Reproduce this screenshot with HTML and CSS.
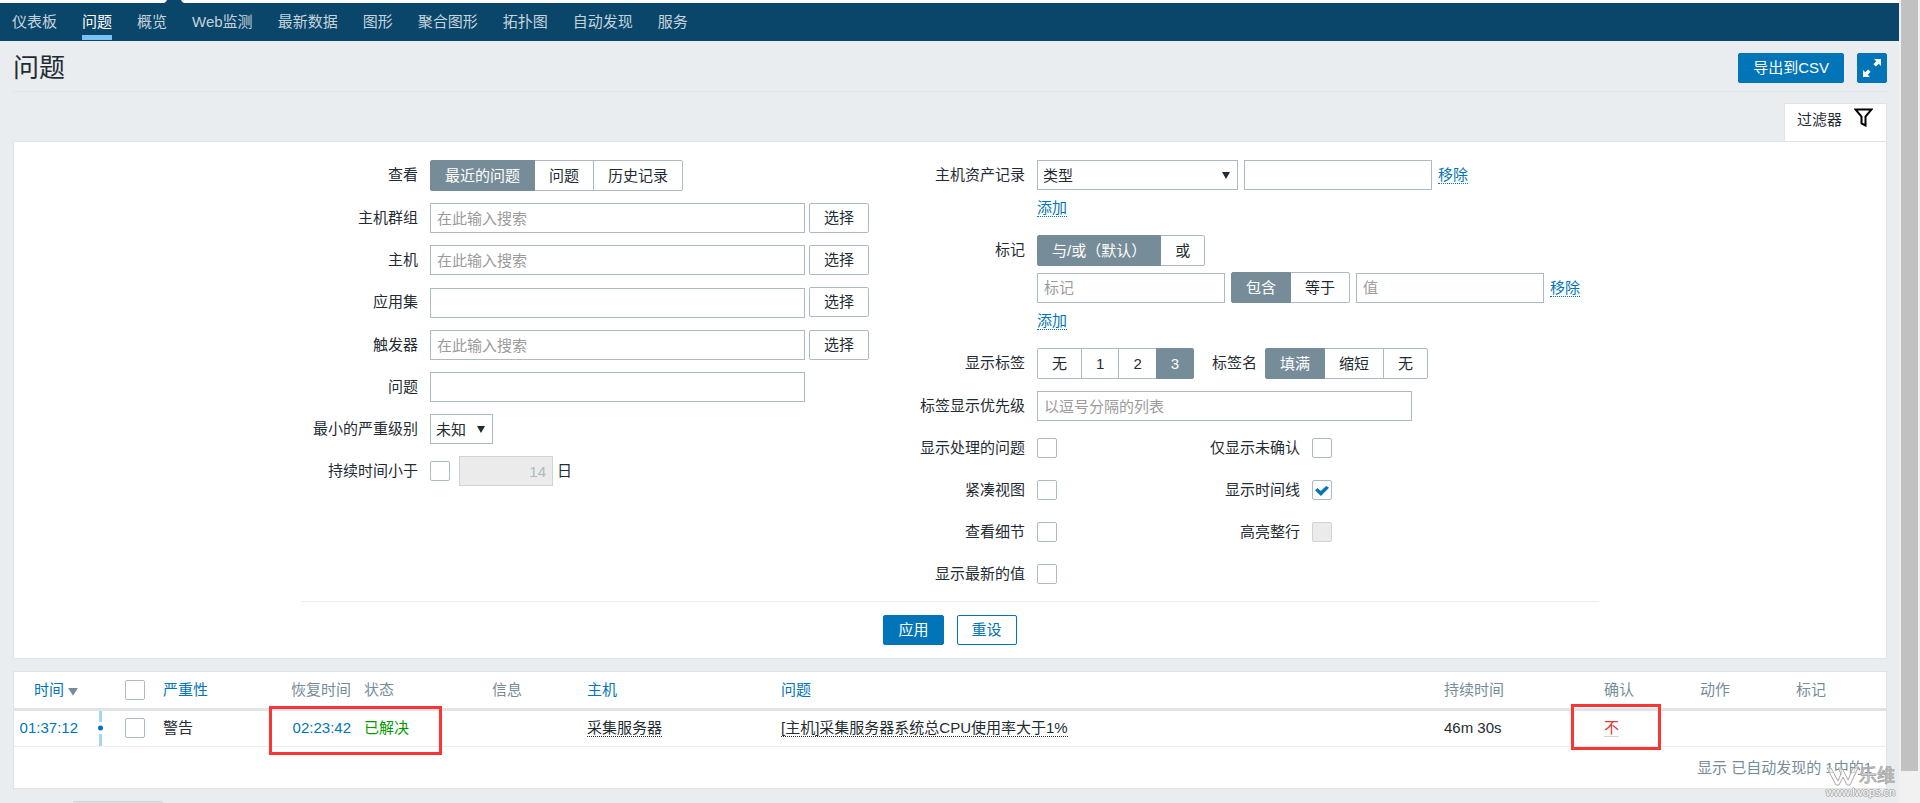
FILE: index.html
```html
<!DOCTYPE html>
<html lang="zh-CN">
<head>
<meta charset="utf-8">
<title>问题</title>
<link rel="stylesheet" href="styles.css">
</head>
<body>
<div class="page">
  <header class="top">
    <svg class="top-marker" width="20" height="3" viewBox="0 0 20 3" aria-hidden="true"><path d="M0 3Q2 2.500 3 0H17Q18 2.500 20 3Z"/></svg>
    <nav class="nav">
      <a href="#">仪表板</a>
      <a href="#" class="active">问题</a>
      <a href="#">概览</a>
      <a href="#">Web监测</a>
      <a href="#">最新数据</a>
      <a href="#">图形</a>
      <a href="#">聚合图形</a>
      <a href="#">拓扑图</a>
      <a href="#">自动发现</a>
      <a href="#">服务</a>
    </nav>
  </header>

  <main class="content">
    <div class="title-bar">
      <h1>问题</h1>
      <button type="button" class="btn primary">导出到CSV</button>
      <button type="button" class="btn primary icon-btn" aria-label="全屏">
        <svg width="18" height="18" viewBox="0 0 18 18" aria-hidden="true"><path fill="currentColor" d="M11 0H18V7L15.700 4.700 12.800 7.600 10.400 5.200 13.300 2.300ZM0 11L2.300 13.300 5.200 10.400 7.600 12.800 4.700 15.700 7 18H0Z"/></svg>
      </button>
    </div>

    <div class="tab-row">
      <a href="#filter" class="filter-tab">过滤器
        <svg width="19" height="19" viewBox="0 0 19 19" aria-hidden="true"><path fill="none" stroke="#000" stroke-width="2" d="M1.500 1.500H17.500L11.500 8.500V17.500L7.500 15.500V8.500Z"/></svg>
      </a>
    </div>

    <form class="filter" id="filter">
      <div class="filter-body">
        <div class="form-left">
          <div class="row">
            <span class="label" id="l-show">查看</span>
            <div class="segment" role="radiogroup" aria-labelledby="l-show">
              <label><input type="radio" name="show" checked>最近的问题</label>
              <label><input type="radio" name="show">问题</label>
              <label><input type="radio" name="show">历史记录</label>
            </div>
          </div>
          <div class="row">
            <label class="label" for="groups">主机群组</label>
            <div class="field"><input id="groups" class="text wide" type="text" placeholder="在此输入搜索"><button type="button" class="btn plain">选择</button></div>
          </div>
          <div class="row">
            <label class="label" for="hosts">主机</label>
            <div class="field"><input id="hosts" class="text wide" type="text" placeholder="在此输入搜索"><button type="button" class="btn plain">选择</button></div>
          </div>
          <div class="row tall">
            <label class="label" for="apps">应用集</label>
            <div class="field"><input id="apps" class="text wide" type="text"><button type="button" class="btn plain">选择</button></div>
          </div>
          <div class="row">
            <label class="label" for="triggers">触发器</label>
            <div class="field"><input id="triggers" class="text wide" type="text" placeholder="在此输入搜索"><button type="button" class="btn plain">选择</button></div>
          </div>
          <div class="row">
            <label class="label" for="problem">问题</label>
            <div class="field"><input id="problem" class="text wide" type="text"></div>
          </div>
          <div class="row">
            <label class="label" for="severity">最小的严重级别</label>
            <div class="select severity"><select id="severity"><option>未知</option></select></div>
          </div>
          <div class="row">
            <label class="label" for="age">持续时间小于</label>
            <div class="field age"><input id="age" class="check" type="checkbox"><input class="text days" type="text" value="14" aria-label="天数" disabled><span>日</span></div>
          </div>
        </div>

        <div class="form-right">
          <div class="row">
            <label class="label" for="inventory">主机资产记录</label>
            <div class="stack">
              <div class="field inventory">
                <div class="select inventory-type"><select id="inventory"><option>类型</option></select></div>
                <input class="text half" type="text" aria-label="主机资产记录值">
                <a href="#" class="action">移除</a>
              </div>
              <a href="#" class="action add">添加</a>
            </div>
          </div>
          <div class="row">
            <span class="label" id="l-tags">标记</span>
            <div class="stack">
              <div class="segment" role="radiogroup" aria-labelledby="l-tags">
                <label><input type="radio" name="evaltype" checked>与/或（默认）</label>
                <label><input type="radio" name="evaltype">或</label>
              </div>
              <div class="field tag">
                <input class="text half" type="text" placeholder="标记" aria-label="标记">
                <div class="segment" role="radiogroup" aria-label="匹配方式">
                  <label><input type="radio" name="operator" checked>包含</label>
                  <label><input type="radio" name="operator">等于</label>
                </div>
                <input class="text half" type="text" placeholder="值" aria-label="值">
                <a href="#" class="action">移除</a>
              </div>
              <a href="#" class="action add">添加</a>
            </div>
          </div>
          <div class="row">
            <span class="label" id="l-showtags">显示标签</span>
            <div class="field">
              <div class="segment" role="radiogroup" aria-labelledby="l-showtags">
                <label><input type="radio" name="showtags">无</label>
                <label><input type="radio" name="showtags">1</label>
                <label><input type="radio" name="showtags">2</label>
                <label><input type="radio" name="showtags" checked>3</label>
              </div>
              <span class="tag-name" id="l-tagname">标签名</span>
              <div class="segment" role="radiogroup" aria-labelledby="l-tagname">
                <label><input type="radio" name="tagname" checked>填满</label>
                <label><input type="radio" name="tagname">缩短</label>
                <label><input type="radio" name="tagname">无</label>
              </div>
            </div>
          </div>
          <div class="row">
            <label class="label" for="priority">标签显示优先级</label>
            <input id="priority" class="text wide" type="text" placeholder="以逗号分隔的列表">
          </div>
          <div class="row pair">
            <label class="label" for="suppressed">显示处理的问题</label><input id="suppressed" class="check" type="checkbox">
            <label class="label" for="unack">仅显示未确认</label><input id="unack" class="check" type="checkbox">
          </div>
          <div class="row pair">
            <label class="label" for="compact">紧凑视图</label><input id="compact" class="check" type="checkbox">
            <label class="label" for="timeline">显示时间线</label><input id="timeline" class="check" type="checkbox" checked>
          </div>
          <div class="row pair">
            <label class="label" for="details">查看细节</label><input id="details" class="check" type="checkbox">
            <label class="label" for="highlight">高亮整行</label><input id="highlight" class="check" type="checkbox" disabled>
          </div>
          <div class="row pair">
            <label class="label" for="latest">显示最新的值</label><input id="latest" class="check" type="checkbox">
          </div>
        </div>
      </div>
      <div class="filter-actions">
        <button type="button" class="btn primary">应用</button>
        <button type="reset" class="btn outline">重设</button>
      </div>
    </form>

    <section class="list">
      <table class="problems">
        <colgroup>
          <col class="c-time"><col class="c-line"><col class="c-check"><col class="c-severity"><col class="c-recovery"><col class="c-status"><col class="c-info"><col class="c-host"><col><col class="c-duration"><col class="c-ack"><col class="c-actions"><col class="c-tags">
        </colgroup>
        <thead>
          <tr>
            <th class="right"><a href="#" class="sort">时间<span class="sort-arrow"></span></a></th>
            <th></th>
            <th><input class="check" type="checkbox" aria-label="全选"></th>
            <th><a href="#">严重性</a></th>
            <th class="right">恢复时间</th>
            <th>状态</th>
            <th>信息</th>
            <th><a href="#">主机</a></th>
            <th><a href="#">问题</a></th>
            <th>持续时间</th>
            <th>确认</th>
            <th>动作</th>
            <th>标记</th>
          </tr>
        </thead>
        <tbody>
          <tr>
            <td class="right time"><a href="#">01:37:12</a></td>
            <td class="axis"><span class="dot"></span></td>
            <td><input class="check" type="checkbox" aria-label="选择问题"></td>
            <td>警告</td>
            <td class="right marked"><a href="#">02:23:42</a><span class="mark mark-status"></span></td>
            <td class="ok">已解决</td>
            <td></td>
            <td><a href="#" class="dotted">采集服务器</a></td>
            <td><a href="#" class="dotted">[主机]采集服务器系统总CPU使用率大于1%</a></td>
            <td>46m 30s</td>
            <td class="marked"><a href="#" class="no">不</a><span class="mark mark-ack"></span></td>
            <td></td>
            <td></td>
          </tr>
        </tbody>
      </table>
      <p class="stats">显示 已自动发现的 1中的1</p>
    </section>

    <button type="button" class="btn bulk" disabled aria-label="批量更新"></button>
  </main>

  <div class="watermark">
    <svg width="33" height="19" viewBox="0 0 33 19" aria-hidden="true"><path fill="#fff" fill-opacity=".6" stroke="#aaa" d="M1 1H5L12 14 15 7 12 1H16L22 13 27 1H32L24 18H21L17 10 13 18H10Z"/></svg>
    <span class="wm-name">乐维</span>
    <span class="wm-url">www.lwops.cn</span>
  </div>
</div>
<div class="scroll-track"><div class="scroll-thumb"></div></div>
</body>
</html>
```

FILE: styles.css
```css
* { box-sizing: border-box; }

body {
  margin: 0;
  display: flex;
  height: 100vh;
  overflow: hidden;
  background: #e9edf0;
  color: #1f2c33;
  font: 15px/18px "Liberation Sans", "Noto Sans CJK SC", sans-serif;
}

a { color: #0275b8; text-decoration: none; }
input, select, button { font: inherit; color: inherit; margin: 0; }

.page { position: relative; flex: 1; min-width: 0; height: 100vh; overflow: hidden; }

/* Navigation */
.top { position: relative; border-top: 3px solid #fff; background: #0a466a; }
.top-marker { position: absolute; left: 164px; top: -3px; fill: #0a466a; }
.nav { display: flex; gap: 25px; height: 38px; padding: 0 12px 1px; }
.nav a { padding-top: 10px; color: #c5d3dc; border-bottom: 5px solid transparent; }
.nav .active { color: #fff; border-color: #7ac2f5; }

.content { padding: 0 12px 0 13px; }

/* Title */
.title-bar {
  display: flex;
  align-items: center;
  gap: 13px;
  height: 51px;
  padding-top: 4px;
  border-bottom: 1px solid #dfe4e7;
}
h1 { flex: 1; margin: 0; font-size: 26px; line-height: 32px; font-weight: 400; }

.btn {
  display: flex;
  align-items: center;
  justify-content: center;
  height: 30px;
  padding: 0 14px;
  border: 1px solid;
  border-radius: 2px;
}
.primary { background: #0275b8; border-color: #0275b8; color: #fff; }
.plain { background: #fff; border-color: #acbbc2; }
.outline { background: #fff; border-color: #0275b8; color: #0275b8; }
.icon-btn { width: 30px; padding: 0; }

/* Filter */
.tab-row { display: flex; justify-content: flex-end; margin-top: 11px; }
.filter-tab {
  display: flex;
  gap: 12px;
  height: 38px;
  padding: 4px 13px 0 12px;
  background: #fff;
  border: 1px solid #dfe4e7;
  border-bottom: 0;
  border-radius: 2px 2px 0 0;
  color: #1f2c33;
  line-height: 24px;
}
.filter {
  padding: 18px 0 13px;
  background: #fff;
  border: 1px solid #dfe4e7;
}
.filter-body {
  display: flex;
  gap: 51px;
  max-width: 1298px;
  margin: 0 auto;
  padding-bottom: 12px;
  border-bottom: 1px solid #ebeef0;
}
.form-left, .form-right { display: flex; flex-direction: column; gap: 12px; }
.row { display: flex; gap: 12px; }
.tall { min-height: 31px; }
.label { line-height: 30px; text-align: right; }
.form-left .label { width: 117px; }
.form-right .label { width: 105px; }
.field { display: flex; gap: 4px; }
.stack { display: flex; flex-direction: column; align-items: flex-start; padding-bottom: 6px; }

.text {
  height: 30px;
  padding: 0 6px;
  border: 1px solid #acbbc2;
  background: #fff;
}
.tall .text { align-self: flex-end; }
.text::placeholder { color: #9b9b9b; opacity: 1; }
.wide { width: 375px; }
.half { width: 188px; }
.days { width: 94px; background: #ebebeb; border-color: #ccd5d9; color: #acbbc2; text-align: right; }

.check {
  appearance: none;
  flex: none;
  display: block;
  width: 20px;
  height: 20px;
  border: 1px solid #acbbc2;
  border-radius: 2px;
  background: #fff;
}
.check:disabled { background: #ebebeb; border-color: #ccd5d9; }
.check:checked::before {
  content: "";
  display: block;
  width: 14px;
  height: 10px;
  margin: 5px 2px;
  background: #0275b8;
  clip-path: polygon(0 42%, 18% 20%, 40% 50%, 80% 0, 100% 18%, 42% 100%);
}

.select { position: relative; }
.select select {
  appearance: none;
  display: block;
  width: 100%;
  height: 30px;
  padding: 2px 5px 0;
  border: 1px solid #acbbc2;
  border-radius: 0;
  background: #fff;
}
.select::after {
  content: "";
  position: absolute;
  right: 8px;
  top: 12px;
  width: 8px;
  height: 7px;
  background: #1f2c33;
  clip-path: polygon(0 0, 100% 0, 50% 100%);
  pointer-events: none;
}
.severity { width: 63px; }
.inventory-type { width: 201px; }

.segment { display: flex; }
.segment label {
  position: relative;
  height: 31px;
  padding: 0 14px;
  border: 1px solid #acbbc2;
  line-height: 30px;
  white-space: nowrap;
}
.segment label + label { margin-left: -1px; }
.segment label:first-child { border-radius: 2px 0 0 2px; }
.segment label:last-child { border-radius: 0 2px 2px 0; }
.segment label:has(:checked) { z-index: 1; background: #768d99; border-color: #768d99; color: #fff; }
.segment input { position: absolute; opacity: 0; pointer-events: none; }

.age { align-items: center; }
.age .check { margin-right: 5px; }
.inventory, .tag { align-items: center; gap: 6px; }
.tag { margin-top: 6px; }
.tag-name { margin: 0 4px 0 14px; line-height: 30px; }
.action { line-height: 17px; border-bottom: 1px dotted; }
.add { margin-top: 9px; }
.pair { align-items: center; }
.pair .check + .label { width: 231px; }

.filter-actions { display: flex; justify-content: center; gap: 13px; padding-top: 13px; }

/* Problem list */
.list { margin-top: 12px; background: #fff; border: 1px solid #dfe4e7; }
.problems { width: 100%; table-layout: fixed; border-collapse: collapse; }
.problems th, .problems td { padding: 0; text-align: left; font-weight: 400; white-space: nowrap; }
.problems th { height: 37px; border-bottom: 3px solid #dfe4e7; color: #768d99; }
.problems td { height: 37px; border-bottom: 1px solid #ebeef0; }
.problems .right { text-align: right; padding-right: 13px; }
.c-time { width: 77px; }
.c-line { width: 34px; }
.c-check { width: 38px; }
.c-severity { width: 100px; }
.c-recovery { width: 101px; }
.c-status { width: 128px; }
.c-info { width: 95px; }
.c-host { width: 194px; }
.c-duration { width: 160px; }
.c-ack { width: 96px; }
.c-actions { width: 96px; }
.c-tags { width: 90px; }

.sort { display: inline-flex; align-items: center; gap: 4px; }
.sort-arrow { width: 10px; height: 8px; margin-top: 4px; background: #768d99; clip-path: polygon(0 0, 100% 0, 50% 100%); }
.axis { background: linear-gradient(#a8d6f0, #a8d6f0) 8px 0 / 3px 100% no-repeat; }
.dot {
  display: block;
  width: 5px;
  height: 12px;
  margin-left: 7px;
  background: radial-gradient(circle, #0275b8 2px, #fff 3px);
}
.ok { color: #090; }
.dotted { color: #1f2c33; border-bottom: 1px dotted; }
.no { color: #e33734; border-bottom: 1px solid #ccd5d9; }
.stats { margin: 0; padding: 12px 14px 11px; text-align: right; color: #768d99; }

/* Highlight frames laid over the table */
.marked { position: relative; }
.mark { position: absolute; border: 3px solid #fc3434; z-index: 2; }
.mark-status { left: 6px; top: -5px; width: 173px; height: 49px; }
.mark-ack { left: -33px; top: -7px; width: 90px; height: 46px; }

.bulk { width: 90px; margin: 12px 0 0 60px; background: #e0e4e7; border-color: #ccd5d9; }

.watermark {
  position: absolute;
  right: 3px;
  bottom: 4px;
  width: 70px;
  display: grid;
  grid-template-columns: 33px 36px;
  color: rgb(255 255 255 / 60%);
  -webkit-text-stroke: 1px #aaa;
}
.wm-name { font-size: 18px; line-height: 19px; }
.wm-url {
  grid-column: 1 / 3;
  color: #fff;
  font-size: 11px;
  line-height: 13px;
  -webkit-text-stroke: 0;
  text-shadow: 1px 0 #aaa, -1px 0 #aaa, 0 1px #aaa, 0 -1px #aaa;
}

/* Scrollbar */
.scroll-track { width: 21px; padding: 0 2px; background: #f1f1f1; }
.scroll-thumb { height: 96%; background: #c1c1c1; }
```
